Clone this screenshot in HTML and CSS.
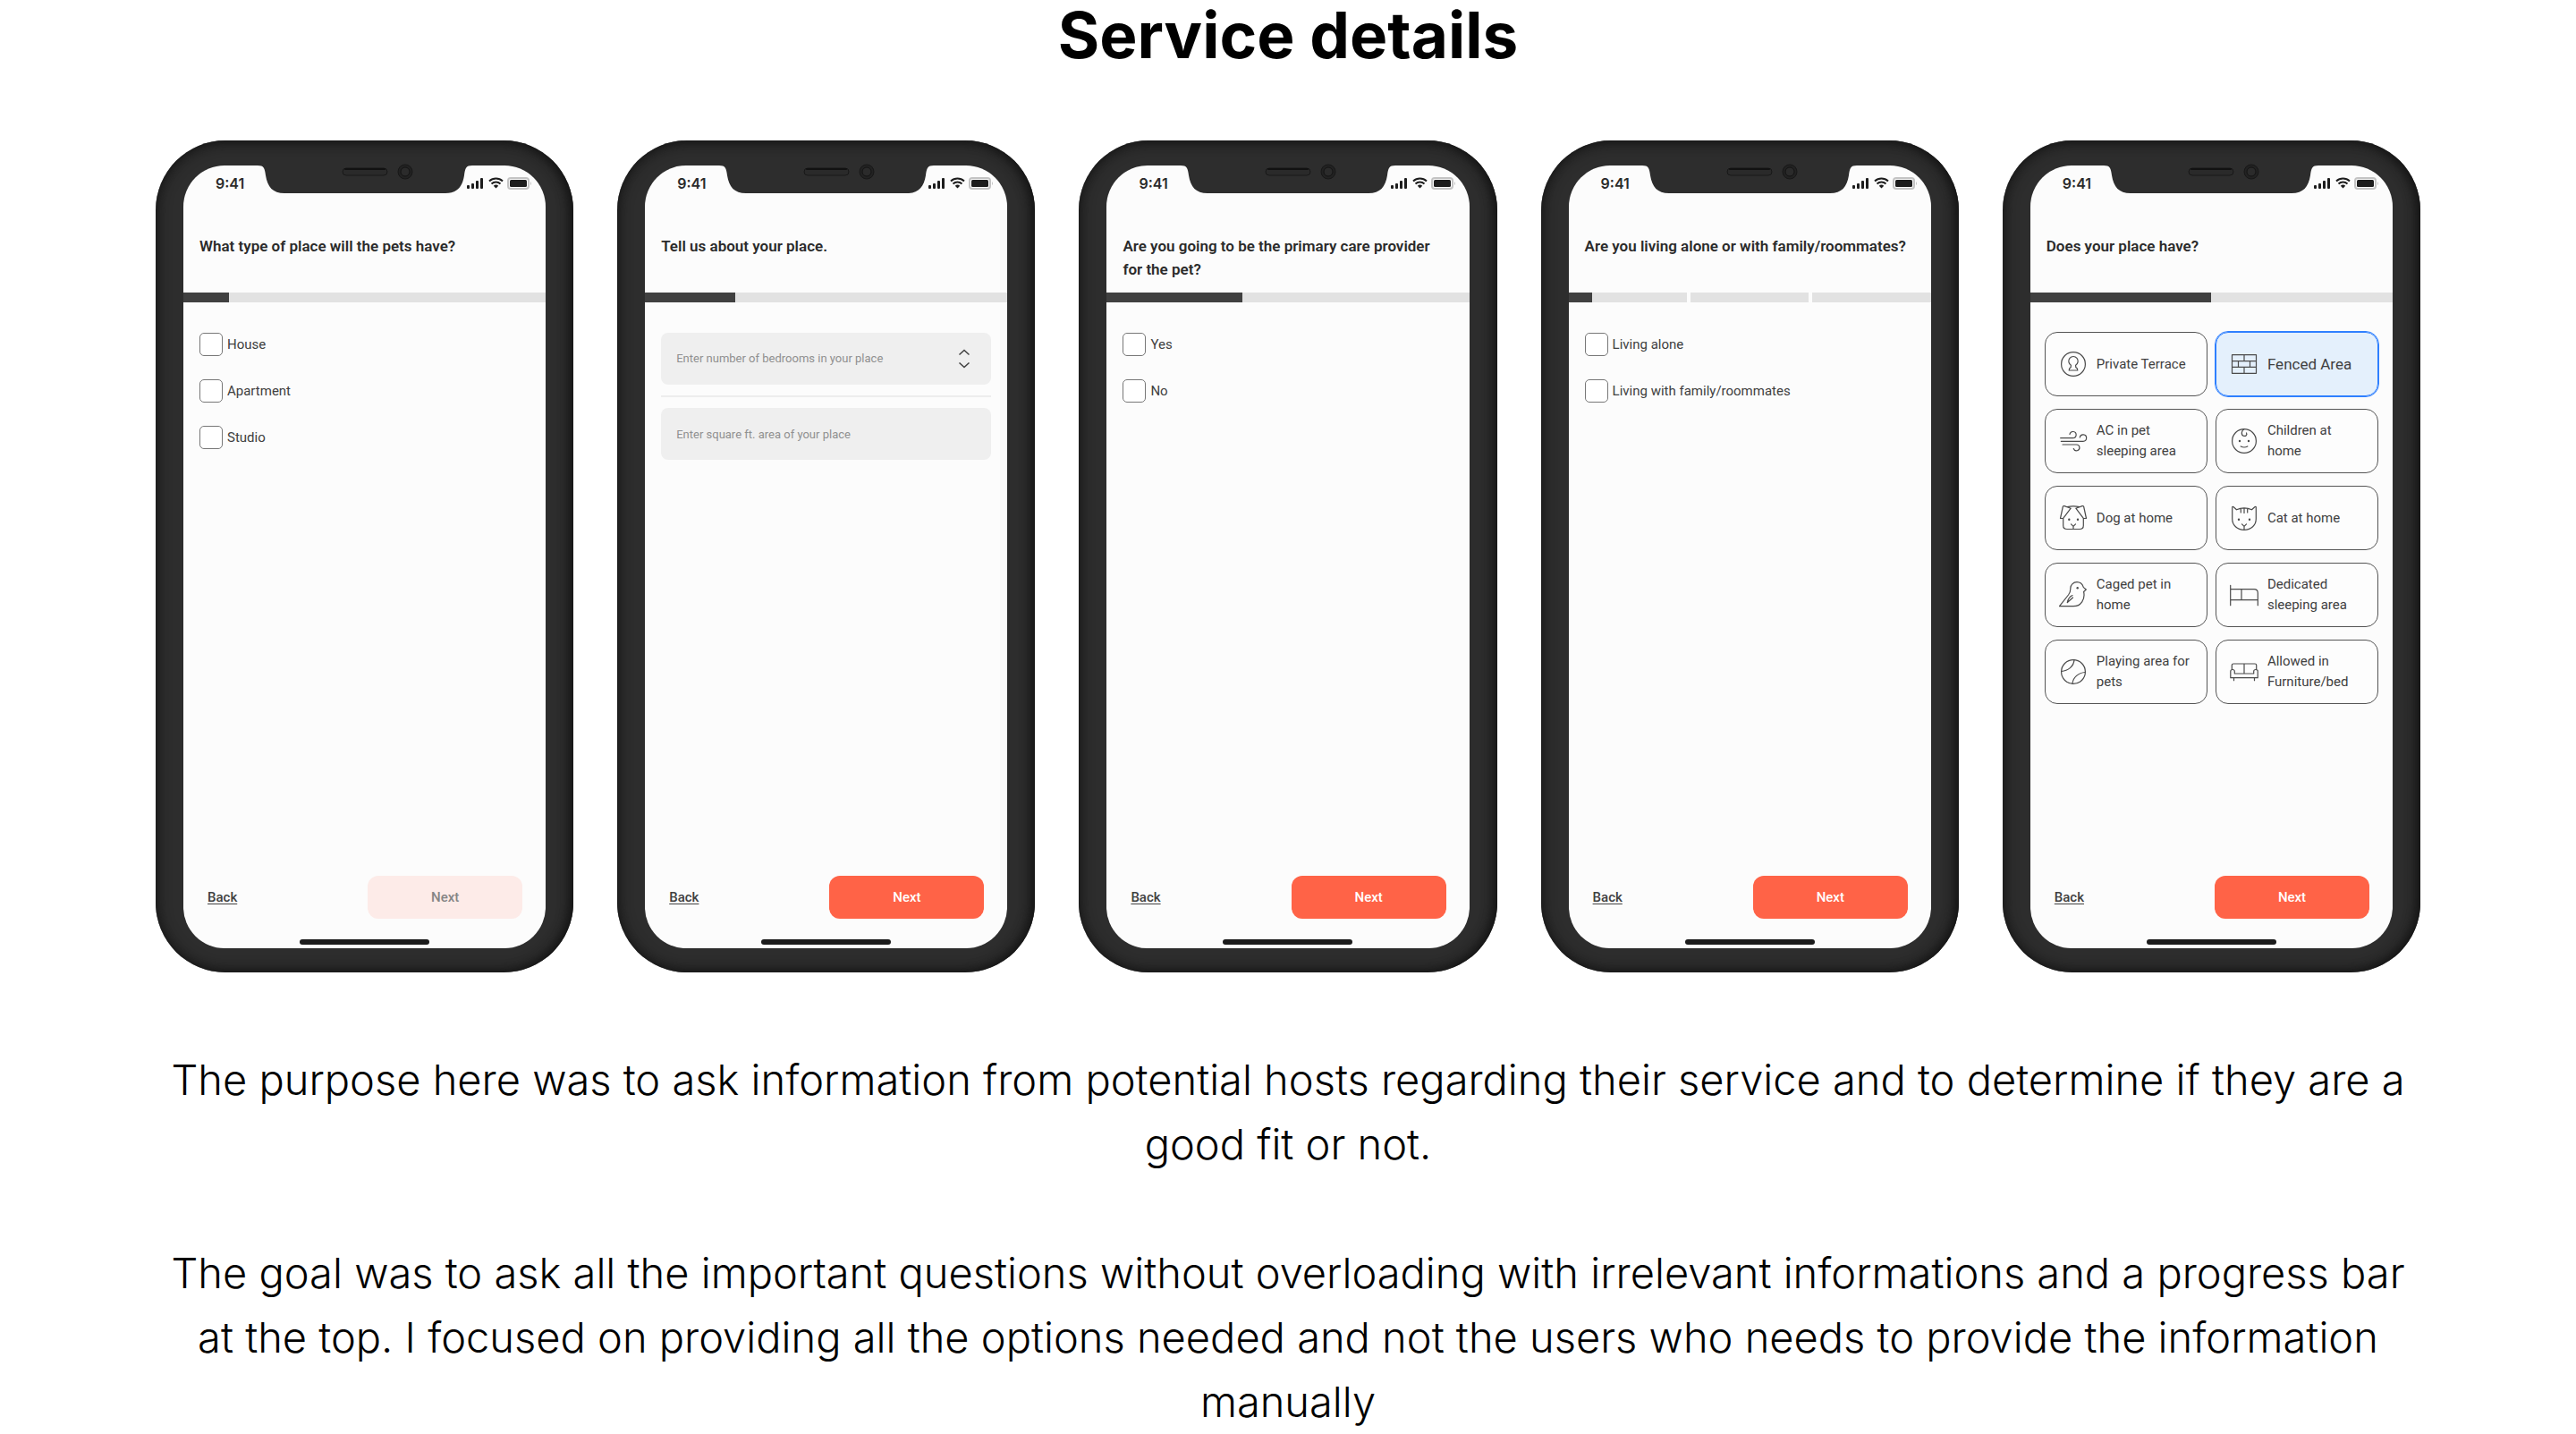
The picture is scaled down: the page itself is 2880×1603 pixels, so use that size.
FILE: index.html
```html
<!DOCTYPE html>
<html lang="en">
<head>
<meta charset="utf-8">
<meta name="viewport" content="width=device-width, initial-scale=1">
<title>Service details</title>
<link rel="stylesheet" href="styles.css">
</head>
<body>
<svg class="symbols" aria-hidden="true">
  <symbol id="notch" viewBox="0 0 240 32">
    <path fill="#2d2d2d" d="M0-1V0C7 0 8 3 9 11C11 24 17 31 30 31H210C223 31 229 24 231 11C232 3 233 0 240 0V-1Z"/>
    <rect x="95" y="3" width="50" height="8" rx="4" fill="#2a2a2a" stroke="#181818"/>
    <path d="M98 4H142" stroke="#111" stroke-width="2" stroke-linecap="round"/>
    <circle cx="165" cy="7" r="8" fill="#222" stroke="#181818"/>
    <circle cx="165" cy="7" r="5" fill="#2b2b2b" stroke="#141414"/>
  </symbol>
  <symbol id="status" viewBox="0 0 74 14">
    <g fill="#1d1d1d">
      <rect x="1" y="9" width="3" height="4" rx="1"/><rect x="6" y="7" width="3" height="6" rx="1"/><rect x="11" y="4" width="3" height="9" rx="1"/><rect x="16" y="1" width="3" height="12" rx="1"/>
      <path d="M33.500 12.500L30.800 9.800A4 4 0 0 1 36.200 9.800Z"/>
      <rect x="49" y="3" width="19" height="8" rx="1.500"/>
    </g>
    <g fill="none" stroke="#1d1d1d" stroke-width="2"><path d="M28.500 7.500A7.200 7.200 0 0 1 38.500 7.500M26 4.500A11 11 0 0 1 41 4.500"/></g>
    <rect x="47" y="1" width="23" height="12" rx="3" fill="none" stroke="#c4c4c4" stroke-width="2"/>
    <path d="M72 5a2.500 2.500 0 0 1 0 4z" fill="#c4c4c4"/>
  </symbol>
  <symbol id="i-private" viewBox="0 0 32 32"><circle cx="16" cy="16" r="13.400"/><path d="M13.400 17.200A5.200 5.200 0 1 1 18.600 17.200L18.800 19.600Q20.800 20.500 20.800 23H11.200Q11.200 20.500 13.200 19.600Z"/></symbol>
  <symbol id="i-fence" viewBox="0 0 32 32"><path d="M2.500 5.700H29.500V26.300H2.500ZM2.500 12.600H29.500M2.500 19.400H29.500M16 5.700V12.600M16 19.400V26.300M9.500 12.600V19.400M22.500 12.600V19.400"/></symbol>
  <symbol id="i-air" viewBox="0 0 32 32"><path d="M1.700 12.700H15.500A3.600 3.600 0 1 0 12 8.500M2.300 16.300H27A3.700 3.700 0 1 0 23.300 12M4 20H19.500A3.400 3.400 0 1 1 16.300 24.500"/></symbol>
  <symbol id="i-child" viewBox="0 0 32 32"><circle cx="16" cy="16" r="13.400"/><path d="M16 2.600C13 4 12.200 9 15.200 10.200C17.700 11.200 19.800 9 18.500 7M12.200 22Q16 24 19.800 22"/><path class="dot" d="M11 16h0M21 16h0"/></symbol>
  <symbol id="i-dog" viewBox="0 0 32 32"><path d="M4.700 16.300L13.200 5.200L6 2.600Q4.500 2.300 4.200 4L1.500 16.500H4.700V24.500Q4.700 28.500 9 28.500H23Q27.300 28.500 27.300 24.500V16.500H30.500L27.800 4Q27.500 2.300 26 2.600L18.800 5.200L27.300 16.300M9 3.700Q16 2.200 23 3.700M13.500 22.800L16 25.300L18.500 22.800M16 25.300V28"/><path class="dot" d="M11.300 17.700h0M21 17.700h0"/></symbol>
  <symbol id="i-cat" viewBox="0 0 32 32"><path d="M2.700 4Q3 2.800 4.200 3.800L7.500 6.800Q16 2.800 24.500 6.800L27.800 3.800Q29 2.800 29.300 4V17C29.300 24 24 29.300 16 29.300S2.700 24 2.700 17ZM12.300 5.500V10M16 5V10.500M19.700 5.500V10M13.500 22.800L16 25.300L18.500 22.800M16 25.300V28.500"/><path class="dot" d="M10 17.700h0M22 17.700h0"/></symbol>
  <symbol id="i-bird" viewBox="0 0 32 32"><path d="M30.300 10L27.400 7.600C26 3.500 23 1.700 20 1.700C16 1.700 12.600 5 12.800 9C12.900 11.500 12.300 13.500 10.500 16L.500 28.700H16C24.500 28.700 29.500 21 27.600 12.500ZM15 16.500Q10.500 18.500 9.300 24.500M9.300 24.500L15.500 19"/><path class="dot" d="M20.700 8.200h0"/></symbol>
  <symbol id="i-bed" viewBox="0 0 32 32"><path d="M.700 5.300V27.700M.700 9.700H27Q31.300 9.700 31.300 14V27.700M.700 21.700H31.300M13 9.700V21.700"/></symbol>
  <symbol id="i-ball" viewBox="0 0 32 32"><circle cx="16" cy="16" r="13.400"/><path d="M17 2.600C16.500 10 10 15 2.700 15.500M29.300 16.500C22 17 15.500 22 15 29.400"/></symbol>
  <symbol id="i-sofa" viewBox="0 0 32 32"><path d="M2.300 13.500V8.500Q2.300 7 4 7H28Q29.700 7 29.700 8.500V13.500M16 7V18M5.300 18H26.700V15.500Q26.700 13.500 29 13.500T31.200 15.500V22.700H.800V15.500Q.800 13.500 3 13.500T5.300 15.500ZM4.500 22.700V25.700M27.500 22.700V25.700"/></symbol>
</svg>

<main class="page">
  <h1 class="title">Service details</h1>

  <div class="phones">
    <section class="phone">
      <div class="screen">
        <svg class="notch" aria-hidden="true"><use href="#notch"/></svg>
        <div class="status"><span>9:41</span><svg class="status-icons" aria-hidden="true"><use href="#status"/></svg></div>
        <h2 class="question">What type of place will the pets have?</h2>
        <div class="steps"><div class="track"><div class="fill" style="width:12.5%"></div></div></div>
        <div class="content checks">
          <label class="check"><input type="checkbox">House</label>
          <label class="check"><input type="checkbox">Apartment</label>
          <label class="check"><input type="checkbox">Studio</label>
        </div>
        <div class="actions"><a class="back" href="#">Back</a><button class="next" type="button" disabled>Next</button></div>
        <div class="home"></div>
      </div>
    </section>

    <section class="phone">
      <div class="screen">
        <svg class="notch" aria-hidden="true"><use href="#notch"/></svg>
        <div class="status"><span>9:41</span><svg class="status-icons" aria-hidden="true"><use href="#status"/></svg></div>
        <h2 class="question">Tell us about your place.</h2>
        <div class="steps"><div class="track"><div class="fill" style="width:25%"></div></div></div>
        <div class="content fields">
          <div class="select-wrap">
            <select class="field" aria-label="Number of bedrooms"><option>Enter number of bedrooms in your place</option></select>
            <svg class="arrows" viewBox="0 0 14 24" aria-hidden="true"><path d="M1.500 7.500L7 2.500L12.500 7.500M1.500 16.500L7 21.500L12.500 16.500"/></svg>
          </div>
          <hr class="rule">
          <input class="field" type="text" aria-label="Area in square feet" placeholder="Enter square ft. area of your place">
        </div>
        <div class="actions"><a class="back" href="#">Back</a><button class="next" type="button">Next</button></div>
        <div class="home"></div>
      </div>
    </section>

    <section class="phone">
      <div class="screen">
        <svg class="notch" aria-hidden="true"><use href="#notch"/></svg>
        <div class="status"><span>9:41</span><svg class="status-icons" aria-hidden="true"><use href="#status"/></svg></div>
        <h2 class="question">Are you going to be the primary care provider<br>for the pet?</h2>
        <div class="steps"><div class="track"><div class="fill" style="width:37.5%"></div></div></div>
        <div class="content checks">
          <label class="check"><input type="checkbox">Yes</label>
          <label class="check"><input type="checkbox">No</label>
        </div>
        <div class="actions"><a class="back" href="#">Back</a><button class="next" type="button">Next</button></div>
        <div class="home"></div>
      </div>
    </section>

    <section class="phone">
      <div class="screen">
        <svg class="notch" aria-hidden="true"><use href="#notch"/></svg>
        <div class="status"><span>9:41</span><svg class="status-icons" aria-hidden="true"><use href="#status"/></svg></div>
        <h2 class="question">Are you living alone or with family/roommates?</h2>
        <div class="steps"><div class="track"><div class="fill" style="width:20%"></div></div><div class="track"></div><div class="track"></div></div>
        <div class="content checks">
          <label class="check"><input type="checkbox">Living alone</label>
          <label class="check"><input type="checkbox">Living with family/roommates</label>
        </div>
        <div class="actions"><a class="back" href="#">Back</a><button class="next" type="button">Next</button></div>
        <div class="home"></div>
      </div>
    </section>

    <section class="phone">
      <div class="screen">
        <svg class="notch" aria-hidden="true"><use href="#notch"/></svg>
        <div class="status"><span>9:41</span><svg class="status-icons" aria-hidden="true"><use href="#status"/></svg></div>
        <h2 class="question">Does your place have?</h2>
        <div class="steps"><div class="track"><div class="fill" style="width:50%"></div></div></div>
        <div class="content tiles">
          <button class="tile" type="button"><svg class="icon" aria-hidden="true"><use href="#i-private"/></svg><span>Private Terrace</span></button>
          <button class="tile selected" type="button" aria-pressed="true"><svg class="icon" aria-hidden="true"><use href="#i-fence"/></svg><span>Fenced Area</span></button>
          <button class="tile" type="button"><svg class="icon" aria-hidden="true"><use href="#i-air"/></svg><span>AC in pet<br>sleeping area</span></button>
          <button class="tile" type="button"><svg class="icon" aria-hidden="true"><use href="#i-child"/></svg><span>Children at<br>home</span></button>
          <button class="tile" type="button"><svg class="icon" aria-hidden="true"><use href="#i-dog"/></svg><span>Dog at home</span></button>
          <button class="tile" type="button"><svg class="icon" aria-hidden="true"><use href="#i-cat"/></svg><span>Cat at home</span></button>
          <button class="tile" type="button"><svg class="icon" aria-hidden="true"><use href="#i-bird"/></svg><span>Caged pet in<br>home</span></button>
          <button class="tile" type="button"><svg class="icon" aria-hidden="true"><use href="#i-bed"/></svg><span>Dedicated<br>sleeping area</span></button>
          <button class="tile" type="button"><svg class="icon" aria-hidden="true"><use href="#i-ball"/></svg><span>Playing area for<br>pets</span></button>
          <button class="tile" type="button"><svg class="icon" aria-hidden="true"><use href="#i-sofa"/></svg><span>Allowed in<br>Furniture/bed</span></button>
        </div>
        <div class="actions"><a class="back" href="#">Back</a><button class="next" type="button">Next</button></div>
        <div class="home"></div>
      </div>
    </section>
  </div>

  <div class="copy">
    <p>The purpose here was to ask information from potential hosts regarding their service and to determine if they are a<br>good fit or not.</p>
    <p>The goal was to ask all the important questions without overloading with irrelevant informations and a progress bar<br>at the top. I focused on providing all the options needed and not the users who needs to provide the information<br>manually</p>
  </div>
</main>
</body>
</html>
```

FILE: styles.css
```css
* { box-sizing: border-box; }

body {
  margin: 0;
  background: #fff;
  color: #000;
  font-family: Inter, "Liberation Sans", sans-serif;
}

.symbols { display: none; }

.page { padding: 0 174px; }

.title {
  margin: 0 0 79px;
  font-size: 71px;
  line-height: 78px;
  font-weight: 700;
  text-align: center;
}

/* Device frames */
.phones {
  display: grid;
  grid-template-columns: repeat(5, minmax(0, 1fr));
  gap: 49px;
  font-family: Roboto, "Liberation Sans", sans-serif;
}

.phone {
  padding: 28px 31px 27px;
  border-radius: 78px;
  background: #2d2d2d;
  box-shadow: inset 0 0 16px #141414, inset -4px 0 12px #181818;
}

.screen {
  position: relative;
  display: flex;
  flex-direction: column;
  min-height: 875px;
  border-radius: 46px;
  background: #fcfcfc;
}

.notch {
  position: absolute;
  top: 0;
  left: 50%;
  width: 240px;
  height: 32px;
  margin-left: -120px;
  overflow: visible;
}

.notch use, #notch { overflow: visible; }

.status {
  display: flex;
  justify-content: space-between;
  align-items: center;
  height: 40px;
  padding: 0 15px 0 36px;
  color: #2b2b2b;
  font: 600 16px/20px Inter, "Liberation Sans", sans-serif;
}

.status-icons { width: 74px; height: 14px; }

.question {
  min-height: 52px;
  margin: 37px 18px 13px;
  color: #2b2b2b;
  font-size: 17px;
  line-height: 26px;
  font-weight: 600;
}

.steps { display: flex; gap: 4px; }
.track { flex: 1; height: 11px; background: #e2e2e2; }
.fill { height: 100%; background: #404040; }

.content { flex: 1; padding: 34px 18px; }

.checks { display: flex; flex-direction: column; gap: 26px; }

.check {
  display: flex;
  align-items: center;
  gap: 5px;
  color: #404040;
  font-size: 15px;
  line-height: 26px;
}

.check input {
  appearance: none;
  width: 26px;
  height: 26px;
  margin: 0;
  border: 1px solid #777;
  border-radius: 5px;
  background: #fff;
}

/* Text fields */
.fields { display: flex; flex-direction: column; gap: 12px; }
.select-wrap { position: relative; }

.field {
  appearance: none;
  display: block;
  width: 100%;
  height: 58px;
  padding: 0 17px;
  border: 0;
  border-radius: 8px;
  background: #efefef;
  color: #909090;
  font: 13px/20px Roboto, "Liberation Sans", sans-serif;
}

.field::placeholder { color: #909090; opacity: 1; }

.arrows {
  position: absolute;
  top: 17px;
  right: 23px;
  width: 14px;
  height: 24px;
  fill: none;
  stroke: #404040;
  stroke-width: 1.5;
}

.rule { width: 100%; height: 2px; margin: 0; border: 0; background: #ededed; }

/* Option tiles */
.tiles {
  display: grid;
  grid-template-columns: 1fr 1fr;
  align-content: start;
  gap: 14px 9px;
  padding: 33px 16px;
}

.tile {
  display: flex;
  align-items: center;
  gap: 10px;
  height: 72px;
  padding: 0 0 0 15px;
  border: 1px solid #555;
  border-radius: 14px;
  background: #fdfdfd;
  color: #404040;
  font: 15px/23px Roboto, "Liberation Sans", sans-serif;
  text-align: left;
  white-space: nowrap;
}

.tile.selected {
  border-color: #2f80ff;
  outline: 1px solid #2f80ff;
  background: #e4f0fc;
  font-size: 17px;
}

.icon {
  flex: none;
  width: 32px;
  height: 32px;
  fill: none;
  stroke: #4a4a4a;
  stroke-width: 1.2;
  stroke-linecap: round;
  stroke-linejoin: round;
}

.dot { stroke-width: 2.4; }

/* Footer controls */
.actions {
  display: flex;
  justify-content: space-between;
  align-items: center;
  padding: 0 26px 0 27px;
}

.back {
  color: #404040;
  font-size: 15px;
  font-weight: 500;
  text-decoration: underline;
  text-decoration-thickness: 1px;
  text-underline-offset: 2px;
}

.next {
  width: 173px;
  height: 48px;
  padding: 0;
  border: 0;
  border-radius: 12px;
  background: #ff6347;
  color: #fff;
  font: 500 15px/20px Roboto, "Liberation Sans", sans-serif;
}

.next:disabled { background: #fdebe8; color: #858585; }

.home {
  align-self: center;
  width: 145px;
  height: 6px;
  margin: 23px 0 4px;
  border-radius: 3px;
  background: #1c1c1c;
}

/* Description */
.copy {
  display: grid;
  gap: 72px;
  margin-top: 84px;
  font-size: 47px;
  line-height: 72px;
  font-weight: 300;
  text-align: center;
}

.copy p { margin: 0; }
```
